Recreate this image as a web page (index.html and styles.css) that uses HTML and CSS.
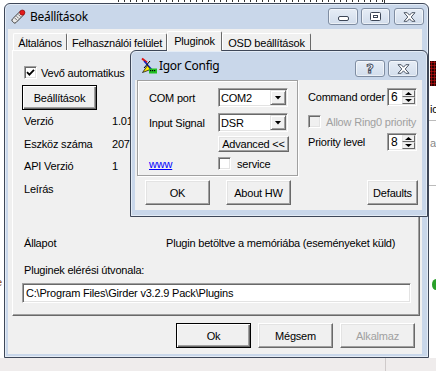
FILE: index.html
```html
<!DOCTYPE html>
<html lang="hu">
<head>
<meta charset="utf-8">
<title>Beállítások</title>
<link rel="stylesheet" href="styles.css">
</head>
<body>
<div class="desktop">
  <div class="bg-ticks"></div>
  <div class="bg-vline"></div>
  <div class="bg-led"></div>
  <div class="bg-text bg-ic">ic</div>
  <div class="bg-hline bg-h1"></div>
  <div class="bg-text bg-a">a</div>
  <div class="bg-hline bg-h2"></div>
  <div class="bg-dot"></div>
  <div class="bg-e">e</div>
  <div class="bg-bottom"><span class="bg-sep"></span></div>

  <div class="win main">
    <div class="titlebar">
      <svg class="appicon" width="16" height="16" viewBox="0 0 16 16">
        <g transform="rotate(45 8 8)">
          <rect x="5.5" y="2" width="5" height="13" rx="1.5" fill="#e9e9e9" stroke="#333" stroke-width="0.9"/>
          <line x1="6.5" y1="6" x2="9.5" y2="6" stroke="#555" stroke-width="0.8"/>
          <line x1="6.5" y1="8.5" x2="9.5" y2="8.5" stroke="#555" stroke-width="0.8"/>
          <line x1="6.5" y1="11" x2="9.5" y2="11" stroke="#555" stroke-width="0.8"/>
        </g>
        <circle cx="12.3" cy="3.6" r="2.6" fill="#e21a1a" stroke="#7a0000" stroke-width="0.6"/>
      </svg>
      <span class="title">Beállítások</span>
      <div class="tbtns">
        <div class="tbtn tmin">
          <svg width="11" height="5" viewBox="0 0 11 5"><rect x="0.5" y="0.5" width="10" height="4" rx="1.5" fill="#fff" stroke="#3c4657"/></svg>
        </div>
        <div class="tbtn tmax">
          <svg width="11" height="9" viewBox="0 0 11 9"><rect x="0.5" y="0.5" width="10" height="8" rx="1" fill="#fff" stroke="#3c4657"/><rect x="3.5" y="3.5" width="4" height="2" fill="none" stroke="#3c4657"/></svg>
        </div>
        <div class="tbtn tclose">
          <svg width="13" height="10" viewBox="0 0 13 10"><path d="M1 0.7H4.2L6.5 3.2L8.8 0.7H12L8.2 5L12 9.3H8.8L6.5 6.8L4.2 9.3H1L4.8 5Z" fill="#fff" stroke="#3c4657" stroke-width="0.9" stroke-linejoin="round"/></svg>
        </div>
      </div>
    </div>
    <div class="client">
      <div class="tabs">
        <div class="tab t1">Általános</div>
        <div class="tab t2">Felhasználói felület</div>
        <div class="tab t3 sel">Pluginok</div>
        <div class="tab t4">OSD beállítások</div>
      </div>
      <div class="panel">
        <div class="chkrow">
          <span class="chk"><svg width="9" height="9" viewBox="0 0 9 9"><path d="M1 4.2L3.4 6.6L8 1.8" fill="none" stroke="#000" stroke-width="1.8"/></svg></span>
          <span>Vevő automatikus</span>
        </div>
        <div class="btn default settings">Beállítások</div>
        <div class="info">
          <span>Verzió</span><span>1.01</span>
          <span>Eszköz száma</span><span>2070</span>
          <span>API Verzió</span><span>1</span>
          <span>Leírás</span><span></span>
        </div>
        <div class="status">
          <span>Állapot</span><span>Plugin betöltve a memóriába (eseményeket küld)</span>
        </div>
        <div class="pathlabel">Pluginek elérési útvonala:</div>
        <div class="field">C:\Program Files\Girder v3.2.9 Pack\Plugins</div>
      </div>
      <div class="actions">
        <div class="btn default act">Ok</div>
        <div class="btn act">Mégsem</div>
        <div class="btn act disabled">Alkalmaz</div>
      </div>
    </div>
  </div>

  <div class="win dlg">
    <div class="titlebar">
      <svg class="igoricon" width="16" height="17" viewBox="0 0 16 17">
        <path d="M1 1.5L6 5.5" stroke="#e01010" stroke-width="2"/>
        <path d="M3 4L12 14" stroke="#1020c0" stroke-width="1.4"/>
        <path d="M9 4L3 11" stroke="#000" stroke-width="1"/>
        <polygon points="1.5,15.5 6.5,8.5 9.5,12.5" fill="#ffe800" stroke="#000" stroke-width="0.7"/>
        <rect x="8" y="11.5" width="8" height="5" fill="#22c022"/>
        <rect x="9" y="13" width="1.2" height="1.2" fill="#000"/>
        <rect x="11" y="13" width="1.2" height="1.2" fill="#000"/>
        <rect x="13" y="13" width="1.2" height="1.2" fill="#000"/>
      </svg>
      <span class="title">Igor Config</span>
      <div class="tbtns">
        <div class="tbtn thelp"><span>?</span></div>
        <div class="tbtn tclose">
          <svg width="13" height="10" viewBox="0 0 13 10"><path d="M1 0.7H4.2L6.5 3.2L8.8 0.7H12L8.2 5L12 9.3H8.8L6.5 6.8L4.2 9.3H1L4.8 5Z" fill="#fff" stroke="#3c4657" stroke-width="0.9" stroke-linejoin="round"/></svg>
        </div>
      </div>
    </div>
    <div class="client">
      <div class="group">
        <div class="grow">
          <span class="lbl">COM port</span>
          <div class="combo"><span class="cval">COM2</span><span class="drop"><i class="tri-dn"></i></span></div>
        </div>
        <div class="grow r2">
          <span class="lbl">Input Signal</span>
          <div class="combo"><span class="cval">DSR</span><span class="drop"><i class="tri-dn"></i></span></div>
        </div>
        <div class="grow r3">
          <span class="lbl"></span>
          <div class="btn adv">Advanced &lt;&lt;</div>
        </div>
        <div class="grow r4">
          <a class="lbl link">www</a>
          <span class="chk"></span>
          <span class="svc">service</span>
        </div>
      </div>
      <div class="side">
        <div class="srow">
          <span class="slbl">Command order</span>
          <div class="spin"><span class="sval">6</span><span class="arrows"><span class="sb"><i class="tri-up"></i></span><span class="sb"><i class="tri-dn"></i></span></span></div>
        </div>
        <div class="srow s2">
          <span class="chk dis"></span>
          <span class="distext">Allow Ring0 priority</span>
        </div>
        <div class="srow s3">
          <span class="slbl">Priority level</span>
          <div class="spin"><span class="sval">8</span><span class="arrows"><span class="sb"><i class="tri-up"></i></span><span class="sb"><i class="tri-dn"></i></span></span></div>
        </div>
      </div>
      <div class="dbtns">
        <div class="btn dok">OK</div>
        <div class="btn dabout">About HW</div>
        <div class="btn ddef">Defaults</div>
      </div>
    </div>
  </div>
</div>
</body>
</html>
```

FILE: styles.css
```css
* { box-sizing: border-box; }
html, body { margin: 0; padding: 0; }
body {
  width: 436px;
  height: 371px;
  overflow: hidden;
  background: #fff;
  font-family: "Liberation Sans", Arial, sans-serif;
  font-size: 11px;
  letter-spacing: -0.2px;
  color: #000;
}
.desktop {
  position: relative;
  width: 436px;
  height: 371px;
  background: #fff;
  overflow: hidden;
}

/* background (other windows behind) */
.bg-ticks {
  position: absolute; left: 118px; top: 0; width: 266px; height: 2px;
  background: repeating-linear-gradient(90deg, #333 0 1px, transparent 1px 6px);
}
.bg-vline { position: absolute; left: 384px; top: 0; width: 1px; height: 3px; background: #333; }
.bg-led {
  position: absolute; left: 430px; top: 61px; width: 6px; height: 25px;
  background-color: #2a0202;
  background-image: radial-gradient(circle, #b01010 0.9px, transparent 1.2px);
  background-size: 3px 3px;
}
.bg-text { position: absolute; left: 430px; font-size: 11px; }
.bg-ic { top: 103px; color: #000; }
.bg-a { top: 137px; color: #888; }
.bg-hline { position: absolute; left: 429px; width: 7px; height: 1px; background: #bbb; }
.bg-h1 { top: 120px; }
.bg-h2 { top: 185px; }
.bg-dot { position: absolute; left: 432px; top: 279px; width: 8px; height: 11px; border-radius: 50%; background: #2aa02a; }
.bg-e { position: absolute; left: -4px; top: 276px; color: #8a4a1a; font-size: 11px; }
.bg-bottom { position: absolute; left: 0; top: 358px; width: 436px; height: 13px; background: #efecec; }
.bg-sep { position: absolute; left: 385px; top: 0; width: 1px; height: 13px; background: #cfcaca; }

/* windows */
.win {
  position: absolute;
  display: flex;
  flex-direction: column;
  border: 1px solid #3e4758;
  border-radius: 6px 6px 0 0;
  background: #c9d7ea;
  box-shadow: inset 0 0 0 1px #e4ecf6;
}
.main { left: 4px; top: 3px; width: 425px; height: 355px; }
.dlg { left: 130px; top: 50px; width: 298px; height: 167px; }

.titlebar { display: flex; align-items: center; flex: none; }
.main .titlebar { height: 25px; padding: 0 4px 0 5px; }
.dlg .titlebar { height: 29px; padding: 0 9px 0 10px; }
.title {
  font-family: "Noto Sans", "Liberation Sans", sans-serif;
  font-size: 12px;
  letter-spacing: -0.3px;
  color: #000;
}
.main .title { margin-left: 4px; }
.dlg .title { margin-left: 2px; }
.appicon, .igoricon { flex: none; }
.tbtns { display: flex; margin-left: auto; }
.dlg .tbtns { align-self: flex-end; margin-bottom: 3px; gap: 3px; }
.tbtn {
  width: 30px; height: 17px;
  border: 1px solid #7f8da2;
  border-radius: 3px;
  background: linear-gradient(#e6edf6, #d2ddec);
  box-shadow: inset 0 0 0 1px rgba(255,255,255,0.55);
  display: flex; align-items: center; justify-content: center;
}
.tmin { align-items: flex-end; padding-bottom: 3px; }
.tmax { width: 29px; margin-left: 3px; }
.main .tclose { margin-left: 4px; }
.thelp span {
  font-family: "DejaVu Sans", sans-serif;
  font-weight: bold;
  font-size: 13px;
  line-height: 13px;
  color: #fff;
  -webkit-text-stroke: 0.9px #3c4657;
}

.client { flex: 1; background: #f0f0f0; }
.main .client {
  margin: 0 6px 3px 3px;
  padding: 2px 0 0 4px;
  display: flex;
  flex-direction: column;
}

/* tabs */
.tabs { display: flex; align-items: flex-end; height: 19px; margin-left: 1px; position: relative; z-index: 1; }
.tab {
  height: 17px;
  border: 1px solid;
  border-color: #fff #696969 transparent #fff;
  border-bottom: none;
  border-radius: 2px 2px 0 0;
  display: flex; align-items: center; justify-content: center;
  padding-top: 1px;
}
.t1 { width: 54px; }
.t2 { width: 100px; }
.t3 { width: 55px; }
.t4 { width: 89px; }
.tab.sel { height: 20px; margin-bottom: -1px; background: #f0f0f0; padding-top: 0; padding-bottom: 2px; }

/* panel */
.panel {
  width: 408px;
  height: 266px;
  border: 1px solid;
  border-color: #fff #696969 #696969 #fff;
  box-shadow: inset -1px -1px 0 #a0a0a0;
  padding-left: 9px;
  display: flex;
  flex-direction: column;
  align-items: flex-start;
}
.chkrow { display: flex; align-items: center; gap: 4px; height: 13px; margin: 15px 0 0 2px; }
.chk {
  width: 13px; height: 13px; flex: none;
  background: #fff;
  border: 1px solid;
  border-color: #a0a0a0 #fff #fff #a0a0a0;
  box-shadow: inset 1px 1px 0 #696969, inset -1px -1px 0 #e3e3e3;
  display: flex; align-items: center; justify-content: center;
}
.chk.dis { background: #f0f0f0; }

.btn {
  background: #f0f0f0;
  border: 1px solid;
  border-color: #fff #696969 #696969 #fff;
  box-shadow: inset -1px -1px 0 #a0a0a0, inset 1px 1px 0 #e3e3e3;
  display: flex; align-items: center; justify-content: center;
  white-space: nowrap;
}
.btn.default {
  border: 1px solid #000;
  box-shadow: inset 1px 1px 0 #fff, inset -1px -1px 0 #696969, inset -2px -2px 0 #a0a0a0;
}
.btn.disabled { color: #a0a0a0; }
.settings { width: 75px; height: 25px; margin-top: 6px; }

.info {
  display: grid;
  grid-template-columns: 88px auto;
  grid-auto-rows: 22.5px;
  align-items: center;
  margin-left: 2px;
}
.status {
  display: grid;
  grid-template-columns: 142px auto;
  height: 22px;
  align-items: center;
  margin: 32px 0 0 2px;
}
.pathlabel { margin: 9px 0 0 2px; line-height: 14px; }
.field {
  width: 389px; height: 20px; margin-top: 6px;
  background: #fff;
  border: 1px solid;
  border-color: #a0a0a0 #fff #fff #a0a0a0;
  box-shadow: inset 1px 1px 0 #696969, inset -1px -1px 0 #e3e3e3;
  padding-left: 3px;
  display: flex; align-items: center;
}

.actions { display: flex; justify-content: flex-end; gap: 7px; margin-top: 7px; padding-right: 7px; }
.act { width: 75px; height: 25px; }

/* dialog client */
.dlg .client {
  margin: 0 5px 6px 4px;
  padding-left: 2px;
  display: grid;
  grid-template-columns: 161px 1fr;
  grid-template-rows: 96px auto;
}
.group {
  border: 1px solid #a0a0a0;
  box-shadow: 1px 1px 0 #fff, inset 1px 1px 0 #fff;
  padding: 7px 0 0 11px;
}
.grow { display: flex; align-items: center; }
.r2 { margin-top: 6px; }
.r3 { margin-top: 4px; }
.r4 { margin-top: 5px; }
.lbl { width: 69px; flex: none; }
.link { color: #0000ff; text-decoration: underline; }
.svc { margin-left: 6px; }
.combo {
  width: 70px; height: 19px;
  background: #fff;
  border: 1px solid;
  border-color: #a0a0a0 #fff #fff #a0a0a0;
  box-shadow: inset 1px 1px 0 #696969, inset -1px -1px 0 #e3e3e3;
  padding: 1px;
  display: flex; align-items: center;
}
.cval { padding-left: 1px; }
.drop {
  margin-left: auto;
  width: 16px; height: 15px;
  background: #f0f0f0;
  border: 1px solid;
  border-color: #e3e3e3 #696969 #696969 #e3e3e3;
  box-shadow: inset 1px 1px 0 #fff, inset -1px -1px 0 #a0a0a0;
  display: flex; align-items: center; justify-content: center;
}
.tri-dn, .tri-up { display: block; width: 7px; height: 4px; background: #000; }
.tri-dn { clip-path: polygon(0 0, 100% 0, 50% 100%); }
.tri-up { clip-path: polygon(50% 0, 100% 100%, 0 100%); }
.adv { width: 71px; height: 16px; }

.side { padding: 8px 0 0 10px; }
.srow { display: flex; align-items: center; }
.slbl { width: 79px; flex: none; }
.s2 { margin-top: 9px; gap: 5px; }
.s3 { margin-top: 5px; }
.distext { color: #a0a0a0; }
.spin {
  width: 30px; height: 18px;
  background: #fff;
  border: 1px solid;
  border-color: #a0a0a0 #fff #fff #a0a0a0;
  box-shadow: inset 1px 1px 0 #696969, inset -1px -1px 0 #e3e3e3;
  padding: 1px;
  display: flex; align-items: center;
}
.sval { padding-left: 2px; font-size: 12px; }
.arrows { margin-left: auto; width: 13px; height: 14px; display: flex; flex-direction: column; }
.sb {
  flex: 1;
  background: #f0f0f0;
  border: 1px solid;
  border-color: #e3e3e3 #696969 #696969 #e3e3e3;
  display: flex; align-items: center; justify-content: center;
}
.sb .tri-up, .sb .tri-dn { width: 7px; height: 3px; }

.dbtns { grid-column: 1 / -1; display: flex; margin-top: 4px; padding-right: 4px; }
.dbtns .btn { height: 25px; }
.dok { width: 65px; margin-left: 8px; }
.dabout { width: 65px; margin-left: 16px; }
.ddef { width: 51px; margin-left: auto; }
```
